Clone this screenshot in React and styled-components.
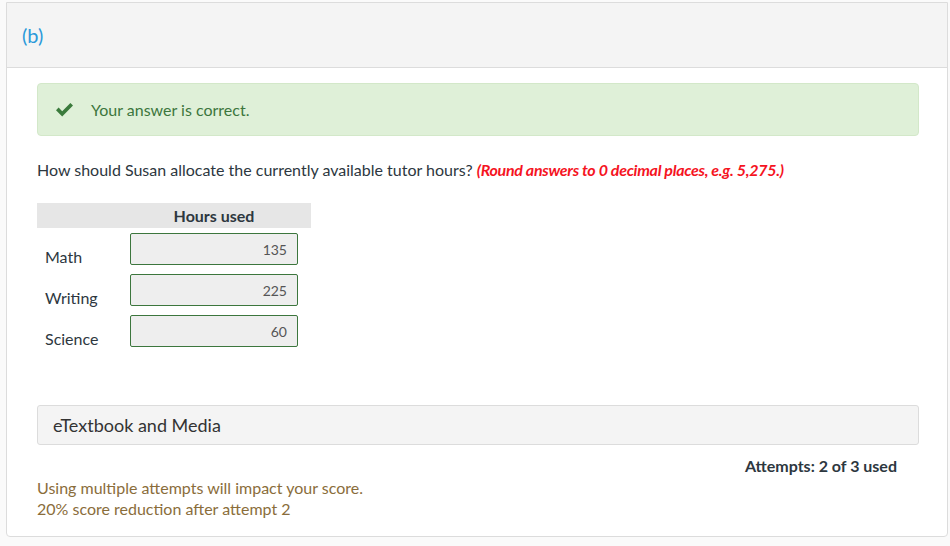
import styled, { createGlobalStyle } from 'styled-components';

const GlobalStyle = createGlobalStyle`
  body {
    margin: 0;
    background: #fafafa;
    font-family: Lato, "Open Sans", sans-serif;
    color: #2d3740;
  }
`;

const Card = styled.div`
  margin: 2px 0 0 6px;
  width: 942px;
  box-sizing: border-box;
  background: #fff;
  border: 1px solid #dcdcdc;
  border-radius: 0 0 4px 4px;
`;

const Header = styled.div`
  height: 64px;
  background: #f4f4f4;
  border-bottom: 1px solid #dcdcdc;
  display: flex;
  align-items: center;
  padding-left: 15px;
  font-size: 20px;
  color: #2b9ada;
`;

const Body = styled.div`
  padding: 15px 28px 17px 30px;
`;

const Alert = styled.div`
  height: 53px;
  box-sizing: border-box;
  display: flex;
  align-items: center;
  gap: 17px;
  padding-left: 17px;
  background: #dff0d8;
  border: 1px solid #d3e8c9;
  border-radius: 4px;
  color: #3c763d;
  font-size: 16px;
`;

const Question = styled.p`
  margin: 24px 0 0;
  font-size: 16px;
  line-height: 20px;
`;

const Hint = styled.span`
  color: #f5141f;
  font-weight: 700;
  font-style: italic;
  letter-spacing: -0.3px;
`;

const Table = styled.div`
  margin-top: 23px;
  width: 274px;
`;

const Row = styled.div`
  display: grid;
  grid-template-columns: 80px 1fr;
`;

const Rows = styled.div`
  margin-top: 5px;
  display: flex;
  flex-direction: column;
  gap: 9px;
`;

const HeadCell = styled.div`
  background: #e6e6e6;
  height: 25px;
  display: flex;
  align-items: center;
  justify-content: center;
  font-size: 16px;
  font-weight: 700;
`;

const Label = styled.div`
  height: 32px;
  box-sizing: border-box;
  padding: 15px 0 0 8px;
  font-size: 16px;
  line-height: 17px;
`;

const Field = styled.div`
  justify-self: center;
  width: 168px;
  height: 32px;
  box-sizing: border-box;
  border: 1px solid #3c763d;
  border-radius: 2px;
  background: #eeeeee;
  display: flex;
  align-items: center;
  justify-content: flex-end;
  padding-right: 10px;
  font-size: 14px;
  color: #555;
`;

const Media = styled.div`
  margin-top: 58px;
  height: 40px;
  box-sizing: border-box;
  display: flex;
  align-items: center;
  padding-left: 15px;
  background: #f4f4f4;
  border: 1px solid #dcdcdc;
  border-radius: 3px;
  font-size: 18px;
  color: #333;
`;

const Attempts = styled.div`
  margin-top: 11px;
  padding-right: 22px;
  text-align: right;
  font-size: 16px;
  font-weight: 700;
  line-height: 20px;
`;

const Warning = styled.div`
  margin-top: 1px;
  color: #8a6d3b;
  font-size: 16px;
  line-height: 21px;
`;

const Check = () => (
  <svg width="19" height="15" viewBox="0 0 19 15">
    <path d="M1 8.2 L3.6 5.6 L7.2 9.2 L15.4 1 L18 3.6 L7.2 14.4 Z" fill="#3b7b3c" />
  </svg>
);

const rows = [
  ['Math', 135],
  ['Writing', 225],
  ['Science', 60],
];

export default function App() {
  return (
    <>
      <GlobalStyle />
      <Card>
        <Header>(b)</Header>
        <Body>
          <Alert>
            <Check />
            Your answer is correct.
          </Alert>
          <Question>
            How should Susan allocate the currently available tutor hours?{' '}
            <Hint>(Round answers to 0 decimal places, e.g. 5,275.)</Hint>
          </Question>
          <Table>
            <Row>
              <HeadCell />
              <HeadCell>Hours used</HeadCell>
            </Row>
            <Rows>
              {rows.map(([name, value]) => (
                <Row key={name}>
                  <Label>{name}</Label>
                  <Field>{value}</Field>
                </Row>
              ))}
            </Rows>
          </Table>
          <Media>eTextbook and Media</Media>
          <Attempts>Attempts: 2 of 3 used</Attempts>
          <Warning>
            Using multiple attempts will impact your score.
            <br />
            20% score reduction after attempt 2
          </Warning>
        </Body>
      </Card>
    </>
  );
}
